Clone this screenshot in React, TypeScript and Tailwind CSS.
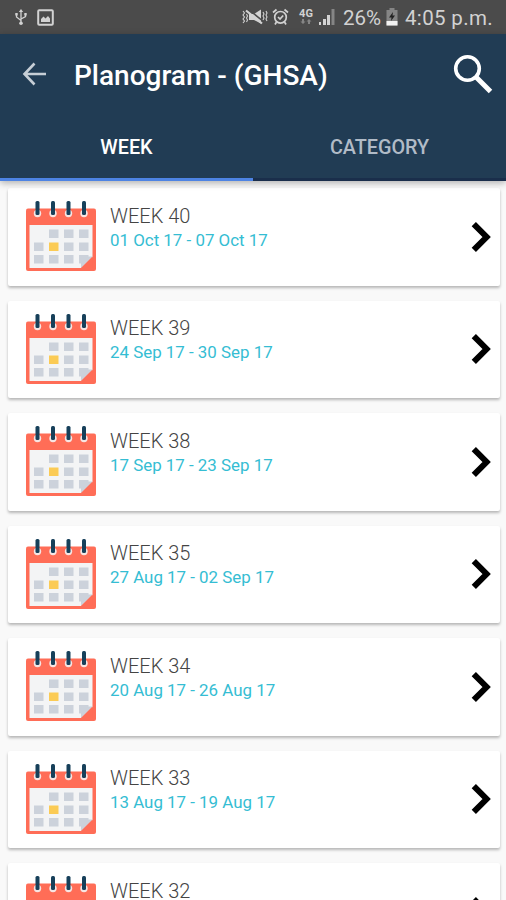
import React, { useState } from 'react';

interface Week {
  number: number;
  range: string;
}

const weeks: Week[] = [
  { number: 40, range: '01 Oct 17 - 07 Oct 17' },
  { number: 39, range: '24 Sep 17 - 30 Sep 17' },
  { number: 38, range: '17 Sep 17 - 23 Sep 17' },
  { number: 35, range: '27 Aug 17 - 02 Sep 17' },
  { number: 34, range: '20 Aug 17 - 26 Aug 17' },
  { number: 33, range: '13 Aug 17 - 19 Aug 17' },
  { number: 32, range: '' },
];

const ringX = [11.5, 27, 42.5, 58];
const cellX = [8, 23, 38, 53];
const cellY = [28.5, 41.5, 54];

const CalendarIcon: React.FC = () => (
  <svg width="70" height="70" viewBox="0 0 70 70" className="shrink-0">
    <rect y="7.5" width="70" height="62.5" rx="2" fill="#ff6d57" />
    <path d="M3.5 24H66.5V56L55 67H3.5Z" fill="#f3f4f5" />
    {cellY.map((y, row) =>
      cellX.map((x, col) =>
        row === 0 && col === 0 ? null : (
          <rect key={`${x}-${y}`} x={x} y={y} width="9.5" height="8.5" fill={row === 1 && col === 1 ? '#fbcb55' : '#ccd2db'} />
        )
      )
    )}
    <path d="M55 67V55.5H66.5V56Z" fill="#ccd2db" />
    <path d="M55 67L66.5 55.5V67Z" fill="#ff6d57" />
    {ringX.map((x) => (
      <g key={x}>
        <circle cx={x} cy="12.5" r="3.7" fill="#f6e5e3" />
        <rect x={x - 2} y="0" width="4" height="14" rx="1.5" fill="#17405a" />
      </g>
    ))}
  </svg>
);

const StatusBar: React.FC = () => (
  <div className="flex h-[34px] shrink-0 items-center bg-[#4b4b4b] text-[#d2d2d2]">
    <svg width="14" height="18" viewBox="0 0 14 18" className="ml-[14px]" fill="none" stroke="currentColor" strokeWidth="1.3">
      <path d="M7 3V15M2.5 6V9L7 12.5M11.5 6V8.5L7 11" />
      <path d="M4.8 4L7 1L9.2 4Z" fill="currentColor" stroke="none" />
      <circle cx="7" cy="15.2" r="1.8" fill="currentColor" stroke="none" />
      <path d="M1.3 5H3.7V7.5H1.3ZM10.3 5H12.7V7.5H10.3Z" fill="currentColor" stroke="none" />
    </svg>
    <svg width="17" height="17" viewBox="0 0 17 17" className="ml-[9px]">
      <rect x="1.2" y="1.2" width="14.6" height="14.6" rx="1" fill="none" stroke="currentColor" strokeWidth="2" />
      <path d="M4 13V10L6.5 7.5L8.5 9.5L11 7L13 9.5V13Z" fill="currentColor" />
    </svg>

    <svg width="26" height="18" viewBox="0 0 26 18" className="ml-[188px]" fill="none" stroke="currentColor">
      <path d="M7 6H12L19 1.5V15.5L12 12H7Z" fill="currentColor" stroke="none" />
      <path d="M6 1L22 14" stroke="#4b4b4b" strokeWidth="1.6" />
      <path d="M4 2.5L20 15.5" strokeWidth="2.2" />
      <path d="M1 3L2.5 5L1 7L2.5 9L1 11L2.5 13L1 15M4.5 6L5.5 8L4.5 10L5.5 12L4.5 14M21 4L22 6L21 8L22 10L21 12M24 3L25 5L24 7L25 9L24 11L25 13" strokeWidth="1.1" />
    </svg>
    <svg width="17" height="18" viewBox="0 0 17 18" className="ml-[4px]" fill="none" stroke="currentColor" strokeWidth="1.7">
      <circle cx="8.5" cy="9.3" r="5.8" />
      <path d="M1 4.5L4.5 1.5M16 4.5L12.5 1.5M4.5 14L3 16.5M12.5 14L14 16.5M6 9L8 11L11.2 7.5" />
    </svg>
    <div className="ml-[9px] flex h-[18px] w-[16px] flex-col items-center">
      <span className="font-['Roboto'] text-[11px] leading-[11px] font-bold">4G</span>
      <svg width="12" height="5" viewBox="0 0 12 5" fill="#858585">
        <path d="M3 5L0.5 2.5H2V0H4V2.5H5.5ZM9 0L6.5 2.5H8V5H10V2.5H11.5Z" />
      </svg>
    </div>
    <svg width="18" height="18" viewBox="0 0 18 18" className="ml-[4px]">
      <path d="M1 14H3V17H1ZM5 11H8V17H5ZM9 7H12V17H9Z" fill="currentColor" />
      <path d="M13.5 1H16.5V17H13.5Z" fill="#858585" />
    </svg>
    <span className="ml-[7px] w-[38px] pt-[2px] font-['Roboto'] text-[20.5px] leading-[24px] whitespace-nowrap">26%</span>
    <svg width="12" height="18" viewBox="0 0 12 18" className="ml-[5px]">
      <path d="M3.5 0H8.5V2H11.5V17.5H0.5V2H3.5Z" fill="#858585" />
      <path d="M0.5 13H11.5V17.5H0.5Z" fill="#f2f2f2" />
      <path d="M7 4L3 9.5H5.5L5 13L9 7.5H6.5Z" fill="#222" />
    </svg>
    <span className="ml-[7px] pt-[2px] font-['Roboto'] text-[20.5px] leading-[24px] tracking-[0.35px] whitespace-nowrap">4:05 p.m.</span>
  </div>
);

const WeekCard: React.FC<{ week: Week }> = ({ week }) => (
  <div className="flex h-[97.5px] shrink-0 items-start rounded-[2px] bg-white pl-[18px] shadow-[0_2px_3px_rgba(0,0,0,0.27)]">
    <div className="mt-[13px]">
      <CalendarIcon />
    </div>
    <div className="mt-[14.5px] ml-[14px] flex-1 font-['Roboto'] whitespace-nowrap">
      <div className="text-[20px] leading-[26px] font-light text-[#444444]">WEEK {week.number}</div>
      {week.range && <div className="text-[16.9px] leading-[23px] text-[#35bdd3]">{week.range}</div>}
    </div>
    <svg width="22" height="32" viewBox="0 0 22 32" className="mt-[32.5px] mr-[7px]">
      <path d="M2.8 3.2L15.6 16L2.8 28.8" fill="none" stroke="#000" strokeWidth="6" />
    </svg>
  </div>
);

const App: React.FC = () => {
  const [tab, setTab] = useState('WEEK');

  return (
    <div className="flex h-[900px] w-[506px] flex-col overflow-hidden bg-[#f9f9f9]">
      <StatusBar />
      <header className="z-10 shrink-0 bg-[#213c54] shadow-[0_2px_7px_rgba(0,0,0,0.3)]">
        <div className="flex h-[80px] items-center">
          <svg width="24" height="24" viewBox="0 0 24 24" className="ml-[22px]" fill="none" stroke="#c6ced6" strokeWidth="2.6">
            <path d="M12.5 1.5L2.5 12L12.5 22.5M2.5 12H24" />
          </svg>
          <h1 className="mt-[3px] ml-[28px] flex-1 font-['Roboto'] text-[28px] font-medium whitespace-nowrap text-white">Planogram - (GHSA)</h1>
          <svg width="40" height="40" viewBox="0 0 40 40" className="mr-[13px]" fill="none" stroke="#fff">
            <circle cx="14.5" cy="14.5" r="11.8" strokeWidth="3.6" />
            <path d="M23.5 23.5L37.5 37.5" strokeWidth="5" />
          </svg>
        </div>
        <div className="grid h-[66.5px] grid-cols-2">
          {['WEEK', 'CATEGORY'].map((name) => (
            <button
              key={name}
              onClick={() => setTab(name)}
              className={`border-b-[3px] pt-[4px] font-['Roboto'] text-[19.8px] font-medium ${
                tab === name ? 'border-[#4d83e3] text-white' : 'border-[#1a2e4b] text-[#b1bbc7]'
              }`}
            >
              {name}
            </button>
          ))}
        </div>
      </header>
      <main className="flex flex-col gap-[15px] pt-[7.5px] pr-[6px] pl-[8px]">
        {weeks.map((week) => (
          <WeekCard key={week.number} week={week} />
        ))}
      </main>
    </div>
  );
};

export default App;
